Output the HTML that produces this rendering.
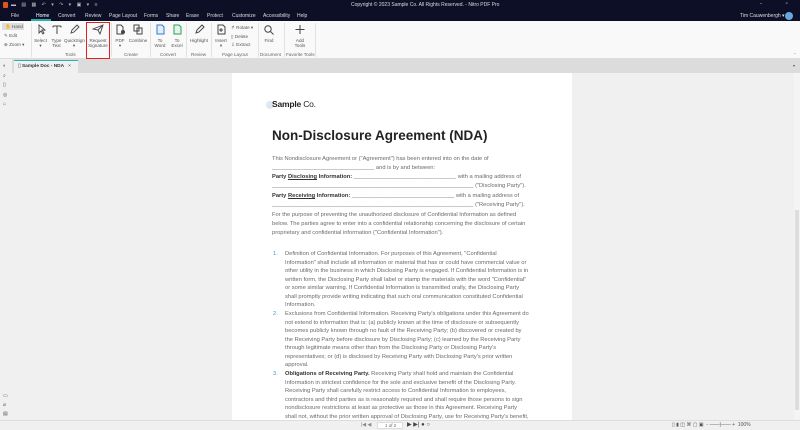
<!DOCTYPE html>
<html><head><meta charset="utf-8"><style>
*{margin:0;padding:0;box-sizing:border-box}
body{width:800px;height:430px;overflow:hidden;font-family:"Liberation Sans",sans-serif;background:#f0f0f0;position:relative}
.a{position:absolute;white-space:nowrap}
#top{position:absolute;left:0;top:0;width:800px;height:21px;background:#0d0f26;color:#ddd;font-size:5px}
#rib{position:absolute;left:0;top:21px;width:800px;height:38px;background:#f9f9f9;border-bottom:1px solid #ddd}
.btn{position:absolute;top:3px;font-size:4.6px;color:#555;text-align:center;line-height:5px}
.ic{display:block;margin:0 auto 3px;width:12px;height:11px}
.grp{position:absolute;top:31px;font-size:4.6px;color:#666}
.sep{position:absolute;top:2px;width:1px;height:34px;background:#e2e2e2}
#tabs{position:absolute;left:0;top:59px;width:800px;height:14px;background:#dcdcdc}
#pg{position:absolute;left:232px;top:73px;width:340px;height:347px;background:#fff}
.t{position:absolute;white-space:nowrap;font-size:5.75px;color:#6a6a6a;left:272px}
.l{left:285px}
.n{position:absolute;left:273px;font-size:5.75px;color:#3a9fc0}
b{color:#333}
#st{position:absolute;left:0;top:420px;width:800px;height:10px;background:#f0f0f0;border-top:1px solid #ddd;font-size:4.5px;color:#666}
</style></head><body>
<div id="top">
<div class="a" style="left:3px;top:2px;width:5px;height:6px;background:#e2541e;border-radius:1px"></div>
<div class="a" style="left:11px;top:2px;color:#bbb;font-size:5px;letter-spacing:2px">▬ ▤ ▦ ↶ ▾ ↷ ▾ ▣ ▾ ≡</div>
<div class="a" style="left:351px;top:2px;color:#ddd">Copyright © 2023 Sample Co. All Rights Reserved. - Nitro PDF Pro</div>
<div class="a" style="left:760px;top:1px;color:#ccc;font-size:6px;letter-spacing:11px">- ▫ ×</div>
<div class="a" style="left:11px;top:13px">File</div>
<div class="a" style="left:36px;top:13px;color:#fff">Home</div>
<div class="a" style="left:31px;top:19px;width:20px;height:2px;background:#2ab0b0"></div>
<div class="a" style="left:58px;top:13px">Convert</div>
<div class="a" style="left:85px;top:13px">Review</div>
<div class="a" style="left:109px;top:13px">Page Layout</div>
<div class="a" style="left:144px;top:13px">Forms</div>
<div class="a" style="left:166px;top:13px">Share</div>
<div class="a" style="left:186px;top:13px">Erase</div>
<div class="a" style="left:207px;top:13px">Protect</div>
<div class="a" style="left:232px;top:13px">Customize</div>
<div class="a" style="left:263px;top:13px">Accessibility</div>
<div class="a" style="left:297px;top:13px">Help</div>
<div class="a" style="left:740px;top:13px">Tim Cauwenbergh ▾</div>
<div class="a" style="left:785px;top:12px;width:8px;height:8px;border-radius:50%;background:#6aa6de"></div>
</div>
<div id="rib">
<div class="a" style="left:2px;top:2px;width:22px;height:7px;background:#ddd;font-size:4.6px;color:#555;padding:1px 0 0 3px">✋ Hand</div>
<div class="a" style="left:4px;top:12px;font-size:4.6px;color:#555">✎ Edit</div>
<div class="a" style="left:4px;top:21px;font-size:4.6px;color:#555">⊕ Zoom ▾</div>
<div class="sep" style="left:31px"></div>
<div class="btn" style="left:33px;width:15px"><svg class="ic" viewBox="0 0 12 11"><path d="M4 1v8l2-2 2 3 1-1-2-3h3z" fill="none" stroke="#444" stroke-width=".9"/></svg>Select<br>▾</div>
<div class="btn" style="left:50px;width:13px"><svg class="ic" viewBox="0 0 12 11"><path d="M2 2h8M6 2v8M2 2v1.5M10 2v1.5" stroke="#444" fill="none"/></svg>Type<br>Text</div>
<div class="btn" style="left:64px;width:20px"><svg class="ic" viewBox="0 0 12 11"><path d="M3 9l1-3 5-5 2 2-5 5z" stroke="#444" fill="none" stroke-width=".9"/></svg>QuickSign<br>▾</div>
<div class="grp" style="left:65px">Tools</div>
<div class="a" style="left:86px;top:1px;width:24px;height:37px;border:1.5px solid #d22"></div>
<div class="btn" style="left:86px;width:24px"><svg class="ic" viewBox="0 0 12 11"><path d="M1 5l10-4-3 9-2-4zM6 6l5-5" stroke="#444" fill="none" stroke-width=".9"/></svg>Request<br>Signature</div>
<div class="sep" style="left:111px"></div>
<div class="btn" style="left:113px;width:14px"><svg class="ic" viewBox="0 0 12 11"><path d="M3 1h4l2 2v7H3z" stroke="#444" fill="none"/><circle cx="9" cy="8" r="2" fill="#444"/></svg>PDF<br>▾</div>
<div class="btn" style="left:128px;width:20px"><svg class="ic" viewBox="0 0 12 11"><path d="M2 1h5v6H2zM5 4h5v6H5z" stroke="#444" fill="none"/></svg>Combine</div>
<div class="grp" style="left:124px">Create</div>
<div class="sep" style="left:150px"></div>
<div class="btn" style="left:152px;width:16px"><svg class="ic" viewBox="0 0 12 11"><path d="M3 1h5l2 2v7H3z" stroke="#2a7dd1" fill="#e3eefa"/></svg>To<br>Word</div>
<div class="btn" style="left:169px;width:16px"><svg class="ic" viewBox="0 0 12 11"><path d="M3 1h5l2 2v7H3z" stroke="#2a9d5a" fill="#e3f5ea"/></svg>To<br>Excel</div>
<div class="grp" style="left:160px">Convert</div>
<div class="sep" style="left:186px"></div>
<div class="btn" style="left:188px;width:22px"><svg class="ic" viewBox="0 0 12 11"><path d="M3 9l1-3 5-5 2 2-5 5z" stroke="#444" fill="none"/></svg>Highlight</div>
<div class="grp" style="left:191px">Review</div>
<div class="sep" style="left:211px"></div>
<div class="btn" style="left:213px;width:16px"><svg class="ic" viewBox="0 0 12 11"><path d="M3 1h5l2 2v7H3zM6 4v4M4 6h4" stroke="#444" fill="none"/></svg>Insert<br>▾</div>
<div class="a" style="left:231px;top:3px;font-size:4.6px;color:#555;line-height:8.5px">↱ Rotate ▾<br>▯ Delete<br>⇩ Extract</div>
<div class="grp" style="left:222px">Page Layout</div>
<div class="sep" style="left:258px"></div>
<div class="btn" style="left:260px;width:18px"><svg class="ic" viewBox="0 0 12 11"><circle cx="5" cy="5" r="3.2" stroke="#444" fill="none"/><path d="M7.5 7.5L10.5 10.5" stroke="#444"/></svg>Find</div>
<div class="grp" style="left:260px">Document</div>
<div class="sep" style="left:284px"></div>
<div class="btn" style="left:288px;width:24px"><svg class="ic" viewBox="0 0 12 11"><path d="M6 1v9M1.5 5.5h9" stroke="#444"/></svg>Add<br>Tools</div>
<div class="grp" style="left:286px">Favorite Tools</div>
<div class="sep" style="left:315px"></div>
<div class="a" style="left:793px;top:31px;font-size:4px;color:#777">⌃</div>
</div>
<div id="tabs">
<div class="a" style="left:14px;top:1px;width:64px;height:13px;background:#f0f0f0;border-top:1px solid #2ab0b0;font-size:4.8px;color:#333;padding:3px 0 0 4px">▯ <b>Sample Doc - NDA</b> &nbsp; ×</div>
<div class="a" style="left:793px;top:4px;font-size:4px;color:#555">▾</div>
</div>
<div class="a" style="left:0;top:59px;width:12px;height:361px;background:#f0f0f0"></div>
<div class="a" style="left:3px;top:62px;font-size:5px;color:#555;line-height:9.5px">◐<br>⌕<br>▯<br>◎<br>⌂</div>
<div class="a" style="left:3px;top:392px;font-size:5px;color:#555;line-height:9px">▭<br>⌀<br>▤</div>
<div class="a" style="left:794px;top:73px;width:6px;height:347px;background:#f4f4f4"></div>
<div class="a" style="left:795px;top:210px;width:4px;height:200px;background:#ddd"></div>
<div id="pg"></div>
<div class="a" style="left:266px;top:101px;width:8px;height:8px;border-radius:50%;background:#dde8f2"></div>
<div class="a" style="left:272px;top:99px;font-size:8.5px;color:#222;letter-spacing:-.2px"><b style="color:#222">Sample</b> Co.</div>
<div class="a" style="left:272px;top:128px;font-size:13.5px;font-weight:bold;color:#222">Non-Disclosure Agreement (NDA)</div>
<div class="t" style="top:156px">This Nondisclosure Agreement or ("Agreement") has been entered into on the date of</div>
<div class="t" style="top:165px">________________________________ and is by and between:</div>
<div class="t" style="top:174px"><b>Party <u>Disclosing</u> Information:</b> ________________________________ with a mailing address of</div>
<div class="t" style="top:183px">_______________________________________________________________ ("Disclosing Party").</div>
<div class="t" style="top:193px"><b>Party <u>Receiving</u> Information:</b> ________________________________ with a mailing address of</div>
<div class="t" style="top:202px">_______________________________________________________________ ("Receiving Party").</div>
<div class="t" style="top:212px">For the purpose of preventing the unauthorized disclosure of Confidential Information as defined</div>
<div class="t" style="top:221px">below. The parties agree to enter into a confidential relationship concerning the disclosure of certain</div>
<div class="t" style="top:230px">proprietary and confidential information ("Confidential Information").</div>
<div class="n" style="top:251px">1.</div>
<div class="t l" style="top:251px">Definition of Confidential Information. For purposes of this Agreement, "Confidential</div>
<div class="t l" style="top:259.5px">Information" shall include all information or material that has or could have commercial value or</div>
<div class="t l" style="top:268px">other utility in the business in which Disclosing Party is engaged. If Confidential Information is in</div>
<div class="t l" style="top:276.5px">written form, the Disclosing Party shall label or stamp the materials with the word "Confidential"</div>
<div class="t l" style="top:285px">or some similar warning. If Confidential Information is transmitted orally, the Disclosing Party</div>
<div class="t l" style="top:293.5px">shall promptly provide writing indicating that such oral communication constituted Confidential</div>
<div class="t l" style="top:302px">Information.</div>
<div class="n" style="top:311px">2.</div>
<div class="t l" style="top:311px">Exclusions from Confidential Information. Receiving Party's obligations under this Agreement do</div>
<div class="t l" style="top:319.5px">not extend to information that is: (a) publicly known at the time of disclosure or subsequently</div>
<div class="t l" style="top:328px">becomes publicly known through no fault of the Receiving Party; (b) discovered or created by</div>
<div class="t l" style="top:336.5px">the Receiving Party before disclosure by Disclosing Party; (c) learned by the Receiving Party</div>
<div class="t l" style="top:345px">through legitimate means other than from the Disclosing Party or Disclosing Party's</div>
<div class="t l" style="top:353.5px">representatives; or (d) is disclosed by Receiving Party with Disclosing Party's prior written</div>
<div class="t l" style="top:362px">approval.</div>
<div class="n" style="top:371px">3.</div>
<div class="t l" style="top:371px"><b>Obligations of Receiving Party.</b> Receiving Party shall hold and maintain the Confidential</div>
<div class="t l" style="top:379.5px">Information in strictest confidence for the sole and exclusive benefit of the Disclosing Party.</div>
<div class="t l" style="top:388px">Receiving Party shall carefully restrict access to Confidential Information to employees,</div>
<div class="t l" style="top:396.5px">contractors and third parties as is reasonably required and shall require those persons to sign</div>
<div class="t l" style="top:405px">nondisclosure restrictions at least as protective as those in this Agreement. Receiving Party</div>
<div class="t l" style="top:413.5px">shall not, without the prior written approval of Disclosing Party, use for Receiving Party's benefit,</div>
<div id="st">
<div class="a" style="left:361px;top:1px;font-size:5px;color:#888">|◀ ◀</div>
<div class="a" style="left:377px;top:1px;width:26px;height:7px;background:#fff;border:1px solid #ddd;font-size:4.5px;padding-left:7px">1 of 2</div>
<div class="a" style="left:407px;top:0px;font-size:6px;color:#444">▶ ▶| ● ○</div>
<div class="a" style="left:672px;top:1px;font-size:5px;color:#555">▯ ▮ ◫ ⌘ ▢ ▣ &nbsp;- ——|—— + &nbsp;100%</div>
</div>
</body></html>
